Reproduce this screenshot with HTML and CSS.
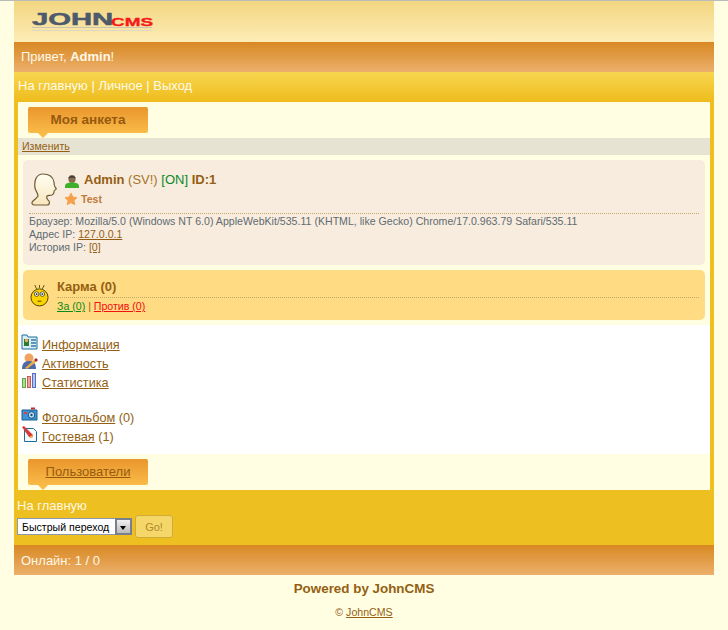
FILE: index.html
```html
<!DOCTYPE html>
<html lang="ru">
<head>
<meta charset="utf-8">
<title>Моя анкета</title>
<link rel="stylesheet" href="styles.css">
</head>
<body>
<div class="wrap">
  <header class="logo-bar">
    <div class="logo">
      <div class="logo-words"><span class="logo-john">JOHN</span><span class="logo-cms">CMS</span></div>
      <div class="logo-shadow"></div>
    </div>
  </header>
  <div class="hello">Привет, <b>Admin</b>!</div>
  <nav class="tmn"><span>На главную</span> | <span>Личное</span> | <span>Выход</span></nav>
  <main class="maintxt">
    <div class="phead">
      <div class="tab"><b class="tab-title">Моя анкета</b></div>
    </div>
    <div class="topmenu"><a href="#">Изменить</a></div>
    <section class="cream">
      <div class="card card-user">
        <div class="user-head">
          <svg class="avatar" width="26" height="33" viewBox="0 0 26 33"><defs><linearGradient id="ava" x1="0" y1="0" x2="0" y2="1"><stop offset="0" stop-color="#fffef4"/><stop offset="1" stop-color="#f8e6bc"/></linearGradient></defs><path d="M12 1c6 0 10 3 11 8 0 2 0 3 1 5 1 1 2 2 0 3-1 0-1 1-1 2s0 2-2 3c-2 .5-4 0-5 1-1 2 0 3 1 4 2 1 2 5-1 5H4c-3 0-4-2-2-4 2-2 4-3 5-5 0-3-2-4-3-8C3 8 5 1 12 1z" fill="url(#ava)" stroke="#6e5c34" stroke-width="1.200"/></svg>
          <div class="user-info">
            <div class="user-line">
              <svg class="ico-user" width="16" height="16" viewBox="0 0 16 16"><ellipse cx="8" cy="6" rx="3.600" ry="4" fill="#8a6a50"/><path d="M4.400 5.500C4.600 2 11.400 2 11.600 5.500 9 4 7 4 4.400 5.500z" fill="#333"/><path d="M1 15v-2c0-3 4-3.500 7-3.500s7 .5 7 3.500v2z" fill="#3fb02c"/></svg>
              <span class="user-text"><b>Admin</b> <span class="rights">(SV!)</span> <span class="online">[ON]</span> <b>ID:1</b></span>
            </div>
            <div class="status-line">
              <svg class="ico-star" width="14" height="14" viewBox="0 0 14 14"><path d="M7 1.200l1.800 3.900 4.200.5-3.100 2.900.9 4.200L7 10.600l-3.800 2.100.9-4.200L1 5.600l4.200-.5z" fill="#f5a04a" stroke="#f5a04a" stroke-linejoin="round"/></svg>
              <span class="status">Test</span>
            </div>
          </div>
        </div>
        <div class="user-meta">
          <div>Браузер: Mozilla/5.0 (Windows NT 6.0) AppleWebKit/535.11 (KHTML, like Gecko) Chrome/17.0.963.79 Safari/535.11</div>
          <div>Адрес IP: <a href="#">127.0.0.1</a></div>
          <div>История IP: <a href="#">[0]</a></div>
        </div>
      </div>
      <div class="card card-karma">
        <svg class="ico-karma" width="19" height="23" viewBox="0 0 20 24"><path d="M7 5L5 1M13 5l2-4M10 4V1" stroke="#5a4a10" stroke-width="1"/><circle cx="10" cy="14" r="9" fill="#fbd400" stroke="#4b3c00"/><circle cx="7" cy="10.500" r="2.400" fill="#fff" stroke="#333" stroke-width=".8"/><circle cx="13" cy="10.500" r="2.400" fill="#fff" stroke="#333" stroke-width=".8"/><circle cx="7" cy="10.500" r="1" fill="#222"/><circle cx="13" cy="10.500" r="1" fill="#222"/><path d="M8 18h4" stroke="#4b3c00"/></svg>
        <div class="karma-body">
          <div class="karma-title"><b>Карма (0)</b></div>
          <div class="karma-votes"><a class="plus" href="#">За (0)</a> | <a class="minus" href="#">Против (0)</a></div>
        </div>
      </div>
    </section>
    <section class="menu">
      <div class="row">
        <svg class="ico" width="17" height="16" viewBox="0 0 17 16"><path d="M1 3V1h5l1 2h9v12H1z" fill="#d9eef7" stroke="#1c6f9b"/><rect x="3" y="5" width="5" height="7" fill="#2c7d2c"/><circle cx="5.500" cy="6.500" r="1.700" fill="#e8b060"/><path d="M10 6h5M10 9h5M10 12h5" stroke="#3a78a8" stroke-width="1.300"/></svg>
        <span class="row-text"><a href="#">Информация</a></span>
      </div>
      <div class="row">
        <svg class="ico" width="17" height="17" viewBox="0 0 17 17"><circle cx="8" cy="5" r="4.500" fill="#f0a35e"/><path d="M1 16c0-6 3-8 7-8s7 2 7 8z" fill="#5068a8"/><path d="M4 15l9-8 2 2-9 7z" fill="#e7b040"/><path d="M13 7l2-2 2 2-2 2z" fill="#b02030"/></svg>
        <span class="row-text"><a href="#">Активность</a></span>
      </div>
      <div class="row">
        <svg class="ico" width="17" height="17" viewBox="0 0 17 17"><rect x="1.500" y="6.500" width="3" height="9" fill="#a8e090" stroke="#5fa850"/><rect x="6.500" y="4.500" width="3" height="11" fill="#f0a0a0" stroke="#c85a50"/><rect x="11.500" y="1.500" width="3" height="14" fill="#b0c4f0" stroke="#5570c0"/></svg>
        <span class="row-text"><a href="#">Статистика</a></span>
      </div>
      <div class="row row-gap">
        <svg class="ico" width="17" height="14" viewBox="0 0 17 14"><path d="M1 3h15v10H1z" fill="#3f93d6" stroke="#17608f"/><rect x="10" y="0.500" width="4" height="2" fill="#c03030"/><circle cx="10.500" cy="8" r="3.300" fill="#bfe0f5" stroke="#17507f"/><circle cx="10.500" cy="8" r="1.200" fill="#17507f"/><rect x="3" y="5" width="3" height="2" fill="#e04040"/></svg>
        <span class="row-text"><a href="#">Фотоальбом</a> (0)</span>
      </div>
      <div class="row">
        <svg class="ico" width="17" height="17" viewBox="0 0 17 17"><path d="M3.500 2.500h9l3 3v10h-12z" fill="#f4fafd" stroke="#1c6f9b"/><path d="M1 1l2-1 9 9-1 3-3-1z" fill="#d83a3a"/><path d="M8 11l3 1 1-3z" fill="#f0c040"/></svg>
        <span class="row-text"><a href="#">Гостевая</a> (1)</span>
      </div>
    </section>
    <div class="phead phead-bottom">
      <div class="tab"><a href="#">Пользователи</a></div>
    </div>
  </main>
  <div class="jump">
    <div class="jump-link">На главную</div>
    <form class="jump-form">
      <div class="select-box">
        <select class="select"><option>Быстрый переход</option></select>
        <span class="select-arrow"></span>
      </div>
      <button class="go" type="button">Go!</button>
    </form>
  </div>
  <div class="hello online-count">Онлайн: 1 / 0</div>
</div>
<footer class="footer">
  <div class="powered">Powered by JohnCMS</div>
  <div class="copy">© <a href="#">JohnCMS</a></div>
</footer>
</body>
</html>
```
FILE: styles.css
```css
* { box-sizing: border-box; }
html, body { margin: 0; padding: 0; }
body {
  background: #fffde2;
  border-top: 1px solid #bbb;
  font-family: "Liberation Sans", Arial, sans-serif;
  font-size: 13px;
  color: #945f12;
  height: 630px;
  overflow: hidden;
}
a { color: #945f12; }
.wrap { width: 700px; margin: 0 14px; }

.logo-bar {
  height: 41px;
  background: linear-gradient(#f2d680, #fdecb6);
  padding: 12px 0 0 18px;
}
.logo { width: 120px; position: relative; }
.logo-words { display: flex; align-items: flex-end; height: 13px; }
.logo-john {
  font: bold 17px/13px "Liberation Sans", sans-serif;
  color: #4c5a6c;
  display: inline-block;
  width: 79px;
  flex: none;
  -webkit-text-stroke: .5px #4c5a6c;
  transform-origin: left bottom;
  transform: scaleX(1.72);
}
.logo-cms {
  font: bold 11px/8px "Liberation Sans", sans-serif;
  color: #f51a1a;
  display: inline-block;
  flex: none;
  -webkit-text-stroke: .3px #f51a1a;
  transform-origin: left bottom;
  transform: scaleX(1.72);
}
.logo-shadow {
  height: 4px;
  margin-top: 1px;
  border-top: 1px solid #c9c5b2;
  border-bottom: 1px solid #dcd8c4;
}

.hello {
  height: 30px;
  background: linear-gradient(#d88822, #ecb06c);
  color: #fff8e6;
  padding: 0 7px;
  line-height: 30px;
}
.online-count { line-height: 32px; }
.tmn {
  height: 30px;
  background: linear-gradient(#f8d650, #eebc1c);
  color: #fffbe8;
  padding: 0 4px;
  line-height: 28px;
}
.maintxt {
  border-left: 4px solid #eebf20;
  border-right: 4px solid #eebf20;
  background: #fffde2;
}
.phead { height: 36px; padding: 5px 0 0 10px; }
.tab {
  position: relative;
  width: 120px;
  height: 26px;
  background: linear-gradient(#ea962c, #f9bb48);
  border-radius: 2px;
  text-align: center;
  line-height: 26px;
  color: #96590f;
}
.tab-title { font-size: 13.5px; }
.tab::after {
  content: "";
  position: absolute;
  left: 10px;
  top: 26px;
  border-left: 5px solid transparent;
  border-right: 5px solid transparent;
  border-top: 5px solid #f9bb48;
}
.tab a { color: #96590f; }
.topmenu {
  height: 17px;
  background: #e6e3d2;
  font-size: 10.6px;
  line-height: 17px;
  padding-left: 4px;
}
.cream { padding: 5px 5px 5px; }
.card { border-radius: 5px; }
.card-user {
  height: 105px;
  background: #f8ecdf;
  padding: 7px 6px 0;
}
.user-head { display: flex; height: 47px; border-bottom: 1px dotted #c4a868; }
.avatar { margin: 6px 7px 0 2px; flex: none; }
.user-line { display: flex; align-items: center; gap: 4px; height: 24px; }
.ico-user { margin-top: 3px; flex: none; }
.rights { color: #a5732a; }
.online { color: #0a8a2a; }
.status-line { display: flex; align-items: center; gap: 3px; font-size: 10.6px; height: 16px; }
.status { color: #c07a38; font-weight: bold; }
.user-meta { font-size: 10.6px; line-height: 13px; padding: 1px 0 0; color: #5f6b70; }
.user-meta div { white-space: nowrap; }
.card-karma {
  height: 50px;
  margin-top: 5px;
  background: #ffdb84;
  padding: 8px 6px 0;
  display: flex;
}
.ico-karma { flex: none; margin: 6px 8px 0 1px; }
.karma-body { flex: 1; }
.karma-title { height: 20px; border-bottom: 1px dotted #c4a868; line-height: 17px; }
.karma-votes { font-size: 10.6px; line-height: 15px; padding-top: 1px; color: #945f12; }
.plus { color: #0a8a1a; }
.minus { color: #f01010; }
.menu { background: #fff; padding: 9px 3px 9px; }
.row { display: flex; align-items: flex-end; height: 19px; }
.row-gap { margin-top: 16px; }
.row-text { font-size: 12.7px; line-height: 15px; }
.ico { flex: none; margin-right: 4px; align-self: flex-start; }
.jump {
  height: 55px;
  background: #eebf20;
  color: #fff8e0;
  padding: 7px 3px 0;
}
.jump-link { line-height: 17px; }
.jump-form { display: flex; align-items: center; gap: 3px; margin-top: 1px; }
.select-box { position: relative; width: 115px; height: 17px; }
.select {
  appearance: none;
  width: 100%;
  height: 17px;
  border: 1px solid #8d98ab;
  border-radius: 0;
  background: #fff;
  color: #000;
  font: 10.6px "Liberation Sans", sans-serif;
  padding: 0 0 0 4px;
}
.select-arrow {
  position: absolute;
  right: 0;
  top: 0;
  width: 17px;
  height: 17px;
  border: 2px solid #7a7f90;
  background: linear-gradient(#f0f0f0, #bbb);
}
.select-arrow::after {
  content: "";
  position: absolute;
  left: 3px;
  top: 6px;
  border-left: 3.500px solid transparent;
  border-right: 3.500px solid transparent;
  border-top: 4px solid #000;
}
.go {
  width: 38px;
  height: 23px;
  padding: 0;
  background: #f5d669;
  border: 1px solid #d2aa3a;
  border-radius: 3px;
  color: #b08a2c;
  font: 11px "Liberation Sans", sans-serif;
}
.footer { text-align: center; padding-top: 6px; }
.powered { font-weight: bold; font-size: 13.4px; line-height: 16px; }
.copy { font-size: 10.6px; line-height: 13px; margin-top: 9px; }
```
